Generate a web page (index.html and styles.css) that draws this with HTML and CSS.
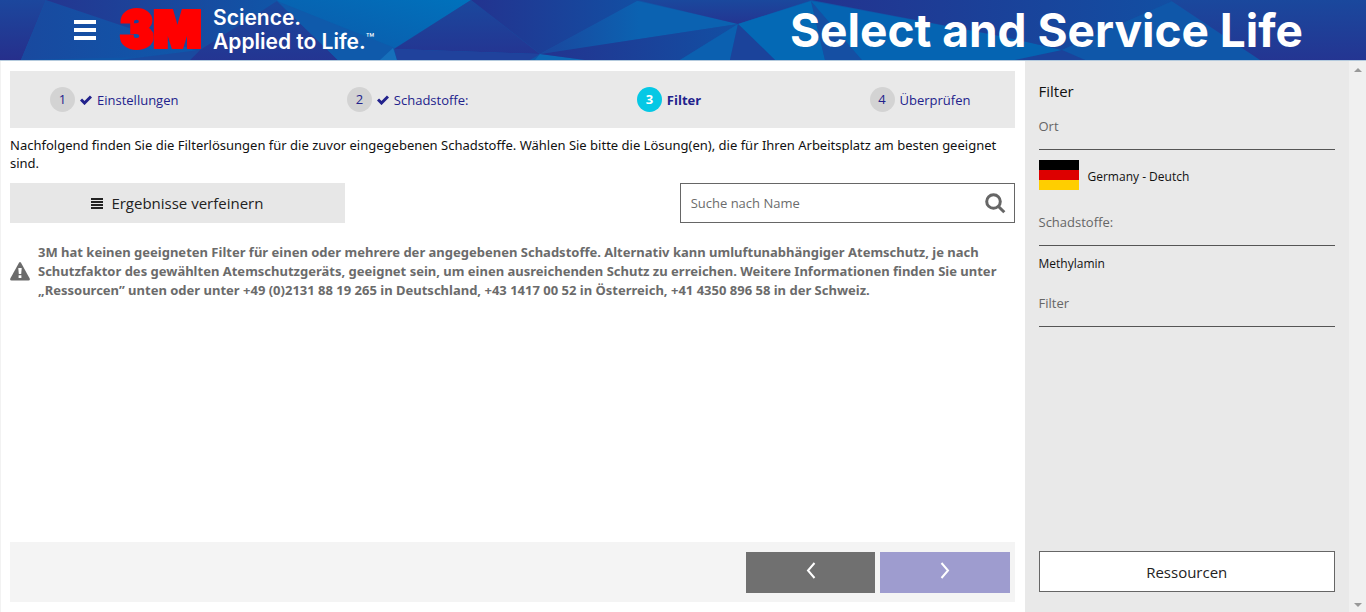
FILE: index.html
```html
<!DOCTYPE html>
<html lang="de">
<head>
<meta charset="utf-8">
<meta name="viewport" content="width=device-width, initial-scale=1">
<title>Select and Service Life</title>
<link rel="stylesheet" href="styles.css">
</head>
<body>
<header class="header">
  <svg class="header-art" viewBox="0 0 1366 60" preserveAspectRatio="none" aria-hidden="true">
    <defs>
      <linearGradient id="left" x1="0" x2="1"><stop offset="0" stop-color="#19499f"/><stop offset="1" stop-color="#0a5fb0"/></linearGradient>
      <linearGradient id="corner" x1="0" x2="0" y1="0" y2="1"><stop offset="0" stop-color="#1c479d"/><stop offset="1" stop-color="#262f8c"/></linearGradient>
      <linearGradient id="top" x1="0" x2="1"><stop offset="0" stop-color="#243690"/><stop offset="1" stop-color="#1056a8"/></linearGradient>
      <linearGradient id="bright" x1="0" x2="1" y1="1" y2="0"><stop offset="0" stop-color="#0e56a8"/><stop offset="1" stop-color="#0072bc"/></linearGradient>
      <linearGradient id="deep" x1="0" x2="0" y1="0" y2="1"><stop offset="0" stop-color="#1a489d"/><stop offset="1" stop-color="#243592"/></linearGradient>
      <linearGradient id="dark" x1="0" x2="1"><stop offset="0" stop-color="#23338f"/><stop offset="1" stop-color="#124fa3"/></linearGradient>
      <linearGradient id="mid" x1="0" x2="1"><stop offset="0" stop-color="#1b469d"/><stop offset="0.500" stop-color="#0b62b1"/></linearGradient>
    </defs>
    <rect width="1366" height="60" fill="#0f56a8"/>
    <polygon points="0,0 46,0 21,60 0,60" fill="url(#corner)"/>
    <polygon points="46,0 280,0 200,56 21,60" fill="url(#left)"/>
    <polygon points="46,0 280,0 200,52" fill="url(#top)"/>
    <polygon points="120,60 200,50 190,60" fill="#1a4a9f"/>
    <polygon points="277,1 338,60 190,60 200,50" fill="url(#deep)"/>
    <polygon points="277,0 471,0 395,48 400,60 338,60" fill="url(#bright)"/>
    <polygon points="277,1 395,48 385,60 338,60" fill="#0f5aab"/>
    <polygon points="393,48 397,60 380,60" fill="#1670bb"/>
    <polygon points="471,0 394,49 540,54" fill="url(#deep)"/>
    <polygon points="394,49 540,54 530,60 397,60" fill="#20429c"/>
    <polygon points="540,54 585,60 535,60" fill="#0d68b5"/>
    <polygon points="471,0 640,0 540,54" fill="url(#dark)"/>
    <polygon points="637,1 738,24 540,54" fill="url(#mid)"/>
    <polygon points="738,24 540,54 585,60 680,60" fill="url(#dark)"/>
    <polygon points="738,24 730,60 680,60" fill="#0b60b0"/>
    <polygon points="637,0 812,0 738,24" fill="url(#deep)"/>
    <polygon points="811,1 738,24 775,60 825,60" fill="#0469b5"/>
    <polygon points="738,24 730,60 775,60" fill="#1b439b"/>
    <polygon points="811,1 825,60 862,60" fill="#154fa3"/>
    <polygon points="811,1 862,60 1030,60 1062,50 1000,36" fill="#0564b2"/>
    <polygon points="811,0 1175,0 1062,50 1000,36" fill="url(#dark)"/>
    <polygon points="1175,0 1260,60 1085,60 1062,50" fill="#0f57a9"/>
    <polygon points="1015,60 1062,50 1085,60" fill="#1b439b"/>
    <polygon points="1170,0 1366,0 1366,60 1260,60" fill="url(#deep)"/>
  </svg>
  <button class="menu-button" type="button" aria-label="Menü"><span></span><span></span><span></span></button>
  <svg class="logo" viewBox="0 0 84 60" role="img" aria-label="3M">
    <text class="logo-text" x="1" y="47">3M</text>
  </svg>
  <p class="tagline">Science.<br>Applied to Life.<sup>™</sup></p>
  <h1 class="title">Select and Service Life</h1>
</header>
<div class="page">
  <main class="main">
    <nav class="steps" aria-label="Schritte">
      <a class="step" href="#einstellungen"><span class="number">1</span><svg class="check" viewBox="0 0 12 10"><path d="M1 4.500 4.500 8 11 1.500" /></svg>Einstellungen</a>
      <a class="step" href="#schadstoffe"><span class="number">2</span><svg class="check" viewBox="0 0 12 10"><path d="M1 4.500 4.500 8 11 1.500" /></svg>Schadstoffe:</a>
      <a class="step current" href="#filter" aria-current="step"><span class="number">3</span>Filter</a>
      <a class="step last" href="#pruefen"><span class="number">4</span>Überprüfen</a>
    </nav>
    <p class="intro">Nachfolgend finden Sie die Filterlösungen für die zuvor eingegebenen Schadstoffe. Wählen Sie bitte die Lösung(en), die für Ihren Arbeitsplatz am besten geeignet sind.</p>
    <div class="tools">
      <button class="refine" type="button"><svg class="bars" viewBox="0 0 12 11"><path d="M0 1h12M0 4h12M0 7h12M0 10h12"/></svg>Ergebnisse verfeinern</button>
      <form class="search">
        <input class="search-input" type="text" placeholder="Suche nach Name" aria-label="Suche nach Name">
        <button class="search-button" type="button" aria-label="Suchen"><svg viewBox="0 0 21 21"><circle cx="8.500" cy="8.500" r="6.800"/><path d="m13.500 13.500 5.800 5.800"/></svg></button>
      </form>
    </div>
    <div class="notice">
      <svg class="warning" viewBox="0 0 20 19"><path class="sign" d="M9 .8Q10-.6 11 .8L19.700 16.600Q20.300 18.500 18.500 18.500H1.500Q-.3 18.500.3 16.600Z"/><path class="mark" d="M8.300 6h3.400l-.5 6H8.800ZM8.600 13.300h2.800v2.700H8.600Z"/></svg>
      <p class="notice-text">3M hat keinen geeigneten Filter für einen oder mehrere der angegebenen Schadstoffe. Alternativ kann umluftunabhängiger Atemschutz, je nach Schutzfaktor des gewählten Atemschutzgeräts, geeignet sein, um einen ausreichenden Schutz zu erreichen. Weitere Informationen finden Sie unter „Ressourcen” unten oder unter +49 (0)2131 88 19 265 in Deutschland, +43 1417 00 52 in Österreich, +41 4350 896 58 in der Schweiz.</p>
    </div>
    <div class="pager">
      <button class="page-button back" type="button" aria-label="Zurück"><svg viewBox="0 0 10 17"><path d="M8.500 1 2 8.500 8.500 16"/></svg></button>
      <button class="page-button next" type="button" aria-label="Weiter"><svg viewBox="0 0 10 17"><path d="M1.500 1 8 8.500 1.500 16"/></svg></button>
    </div>
  </main>
  <aside class="sidebar">
    <div class="summary">
      <h2 class="summary-title">Filter</h2>
      <h3 class="group">Ort</h3>
      <p class="country"><svg class="flag" viewBox="0 0 4 3" preserveAspectRatio="none"><path d="M0 0h4v1H0z"/><path fill="#d00" d="M0 1h4v1H0z"/><path fill="#ffce00" d="M0 2h4v1H0z"/></svg><span class="country-name">Germany - Deutch</span></p>
      <h3 class="group">Schadstoffe:</h3>
      <p class="substance">Methylamin</p>
      <h3 class="group">Filter</h3>
      <button class="resources" type="button">Ressourcen</button>
    </div>
    <div class="scrollbar" aria-hidden="true"><i class="up"></i><i class="down"></i></div>
  </aside>
</div>
</body>
</html>
```
FILE: styles.css
```css
* { box-sizing: border-box; }
body {
  margin: 0;
  min-height: 100vh;
  display: flex;
  flex-direction: column;
  background: #fff;
  color: #111;
  font: 13px/18px "Open Sans", "Noto Sans", sans-serif;
}
h1, h2, h3, p { margin: 0; font-weight: 400; }
button, input { font-family: inherit; margin: 0; border-radius: 0; }
button { padding: 0; border: 0; cursor: pointer; }

.header {
  position: relative;
  display: flex;
  align-items: center;
  height: 61px;
  padding: 0 63px 0 74px;
  border-bottom: 1px solid #b4cadd;
  color: #fff;
}
.header-art { position: absolute; inset: 0; width: 100%; height: 100%; z-index: -1; }
.menu-button { display: grid; gap: 4px; width: 22px; background: none; }
.menu-button span { height: 4px; background: #fff; }
.logo { width: 84px; height: 60px; margin-left: 23px; overflow: visible; }
.logo-text { font: 900 50px Inter, sans-serif; fill: #f00; stroke: #f00; stroke-width: 4px; }
.tagline { margin-left: 10px; font: 600 21px/24px Inter, sans-serif; }
.tagline sup { font-size: 14px; font-weight: 400; line-height: 0; vertical-align: 5px; }
.title { margin-left: auto; font: 700 46px/56px Inter, sans-serif; }

.page { flex: 1; display: grid; grid-template-columns: 3fr 1fr; }
.main { display: flex; flex-direction: column; padding: 10px; border-left: 1px solid #f2f2f2; padding-left: 9px; }
.steps {
  display: flex;
  justify-content: space-between;
  align-items: center;
  height: 57px;
  padding: 0 44px 0 40px;
  background: #e9e9e9;
}
.step { display: flex; align-items: center; color: #22228c; text-decoration: none; }
.number {
  width: 25px;
  height: 25px;
  margin-right: 5px;
  border-radius: 50%;
  background: #d3d3d3;
  line-height: 25px;
  text-align: center;
}
.check { width: 12px; height: 10px; margin-right: 5px; fill: none; stroke: #22228c; stroke-width: 3; }
.current { font-weight: 700; }
.current .number { background: #05c8e5; color: #fff; }
.intro { margin-top: 8px; font-family: "Noto Sans", sans-serif; }
.tools { display: grid; grid-template-columns: 1fr 1fr 1fr; margin-top: 11px; }
.refine {
  display: flex;
  justify-content: center;
  align-items: center;
  gap: 8px;
  height: 40px;
  background: #e7e7e7;
  color: #222;
  font-size: 15px;
}
.bars { width: 12px; height: 11px; stroke: #222; stroke-width: 2; }
.search { grid-column: 3; display: flex; height: 40px; border: 1px solid #666; }
.search-input { flex: 1; min-width: 0; padding: 0 10px; border: 0; background: none; font-size: 13px; outline: 0; }
.search-input::placeholder { color: #6c6c6c; opacity: 1; }
.search-button { width: 38px; background: none; }
.search-button svg { display: block; width: 21px; height: 21px; margin-left: 9px; fill: none; stroke: #666; stroke-width: 3; }
.notice { display: flex; align-items: center; gap: 8px; margin-top: 20px; color: #6b6b6b; }
.notice-text { font: 700 13px/19px "Noto Sans", sans-serif; }
.warning { flex: none; width: 20px; height: 19px; }
.sign { fill: #6b6b6b; }
.mark { fill: #fff; }
.pager { display: flex; justify-content: flex-end; gap: 5px; margin-top: auto; padding: 10px 5px 9px; background: #f4f4f4; }
.page-button { display: grid; place-items: center; width: 13%; height: 41px; }
.page-button svg { width: 10px; height: 17px; margin-bottom: 4px; fill: none; stroke: #fff; stroke-width: 2; }
.back { background: #707070; }
.next { background: #9e9ccf; }

.sidebar { display: flex; background: #e9e9e9; }
.summary { flex: 1; display: flex; flex-direction: column; padding: 20px 14px; }
.summary-title { font-size: 15px; line-height: 20px; }
.group { margin-top: 16px; padding-bottom: 14px; border-bottom: 1px solid #555; color: #666; font-size: 13px; line-height: 18px; }
.country, .substance { font-size: 12px; line-height: 18px; }
.country { display: flex; align-items: center; gap: 9px; margin: 10px 0 7px; }
.country-name { padding-top: 4px; }
.flag { width: 40px; height: 30px; }
.substance { margin: 9px 0 5px; }
.resources { height: 41px; margin-top: auto; border: 1px solid #666; background: #fff; color: #222; font-size: 15px; }
.scrollbar { display: flex; flex-direction: column; justify-content: space-between; align-items: center; width: 17px; padding: 7px 0 5px; background: #f0f0f0; }
.up, .down { border: 4px solid transparent; }
.up { border-top: 0; border-bottom-color: #999; }
.down { border-bottom: 0; border-top-color: #999; }
```
